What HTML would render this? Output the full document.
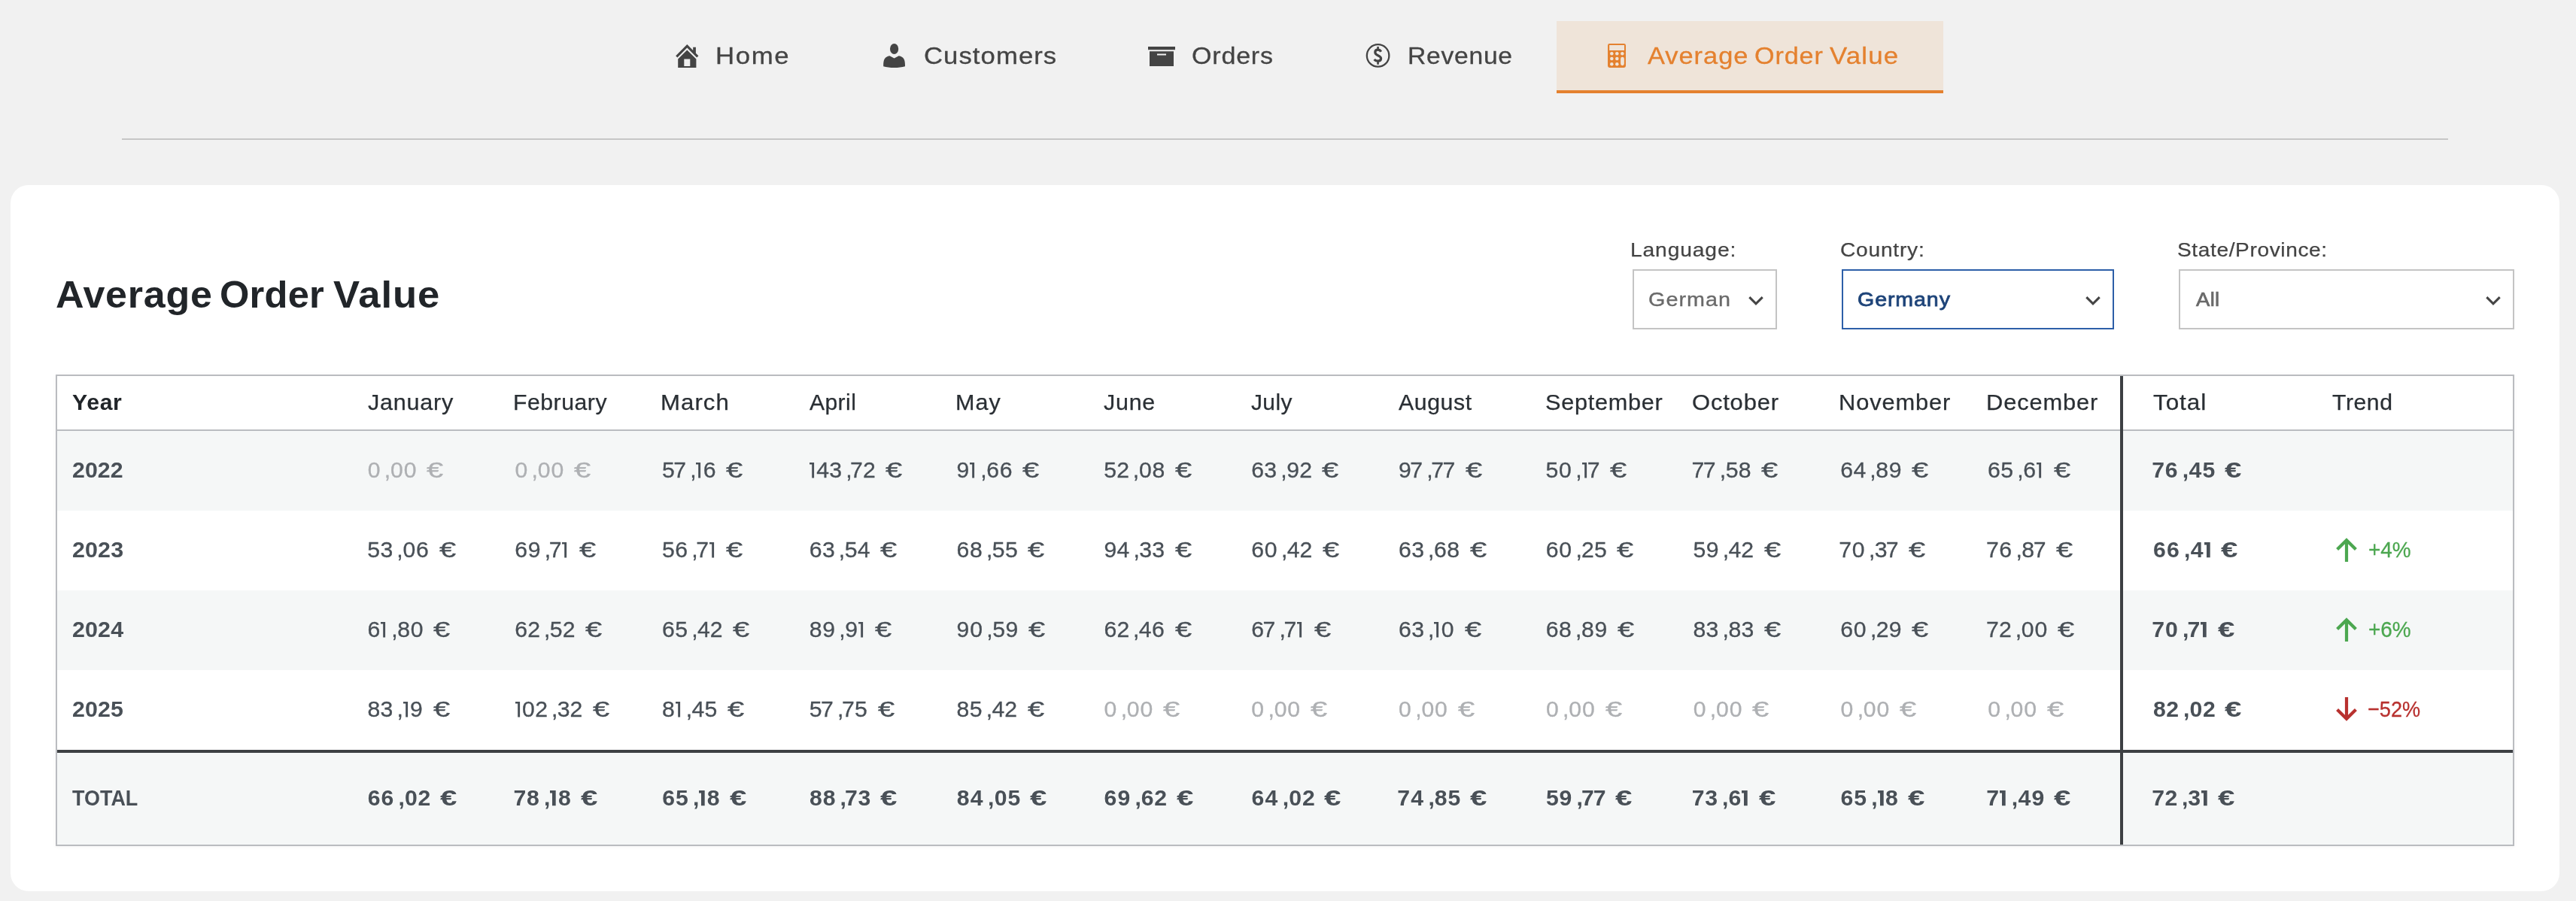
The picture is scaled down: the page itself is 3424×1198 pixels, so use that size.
<!DOCTYPE html>
<html lang="en"><head><meta charset="utf-8"><title>Average Order Value</title>
<style>

html,body{margin:0;padding:0}
body{width:3424px;height:1198px;overflow:hidden;background:#f1f1f1;position:relative;
 font-family:"Liberation Sans",sans-serif;color:#444}
.t{position:absolute;white-space:pre;line-height:1;display:block;transform-origin:0 50%}
.abs{position:absolute}
.nav{font-size:32px;color:#444;-webkit-text-stroke:0.3px currentColor}
.card{position:absolute;left:14px;top:246px;width:3388px;height:939px;background:#fff;border-radius:24px}
.hr{position:absolute;left:162px;top:184px;width:3092px;height:2px;background:#c6c6c6}
.tab{position:absolute;left:2069px;top:28px;width:514px;height:92px;background:#efe4d9;border-bottom:4px solid #e4812f}
.h1{font-size:50.3px;font-weight:700;color:#212529}
.lbl{font-size:26px;color:#444;-webkit-text-stroke:0.25px currentColor}
.sel{position:absolute;box-sizing:border-box;border:2px solid #c4c4c4;background:#fff;top:358px;height:80px}
.sel.act{border-color:#2d5fa8}
.selt{font-size:26.5px;color:#6a6a6a;font-weight:400;-webkit-text-stroke:0.35px #6a6a6a}
.tbl{position:absolute;left:74px;top:498px;width:3268px;height:627px;box-sizing:border-box;border:2px solid #babcc0;background:#fff;
 box-shadow:0 1px 5px rgba(0,0,0,.05)}
.row{position:absolute;left:76px;width:3264px;background:#f5f7f7}
.hl{position:absolute;background:#babcc0}
.dk{position:absolute;background:#3d4043}
.th{font-size:28.8px;color:#2a2f34;-webkit-text-stroke:0.25px currentColor}
.thb{font-size:28.8px;color:#212529;font-weight:700}
.c{position:absolute;white-space:nowrap;line-height:1;font-size:30.2px;color:#495057;-webkit-text-stroke:0.3px currentColor}
.c.z{color:#aeb0b3}
.c.b{font-weight:700;color:#495057;font-size:30.2px;-webkit-text-stroke:0}
.c i{font-style:normal;display:inline-block}
.yr{font-weight:700;color:#495057}
.eu{display:inline-block;transform-origin:0 50%}
.tr{font-size:30px;-webkit-text-stroke:0.3px currentColor}

.c .d0{margin:0 0.45px 0 0.45px}
.c .d2{margin:0 -0.10px 0 -0.10px}
.c .d3{margin:0 0.10px 0 0.10px}
.c .d4{margin:0 0.10px 0 0.10px}
.c .d5{margin:0 0.18px 0 0.18px}
.c .d6{margin:0 0.30px 0 0.30px}
.c .d7{margin:0 0.25px 0 -1.75px}
.c .d8{margin:0 0.25px 0 0.25px}
.c .d9{margin:0 0.30px 0 0.30px}
.c.b .d0{margin:0 0.65px 0 0.65px}
.c.b .d2{margin:0 0.10px 0 0.10px}
.c.b .d3{margin:0 0.30px 0 0.30px}
.c.b .d4{margin:0 0.80px 0 0.80px}
.c.b .d5{margin:0 0.45px 0 0.45px}
.c.b .d6{margin:0 0.50px 0 0.50px}
.c.b .d7{margin:0 0.35px 0 -1.45px}
.c.b .d8{margin:0 0.45px 0 0.45px}
.c.b .d9{margin:0 0.50px 0 0.50px}
.c svg{fill:currentColor;overflow:visible;display:inline-block}
.c .d1{margin:0 3.0px 0 0.6px}
.c.b .d1{margin:0 2.3px 0 0.5px}
.c .cm{margin-left:4.96px;margin-right:-0.70px}
.c.b .cm{margin-left:5.69px;margin-right:-0.44px}
.c .eu{margin-left:13.50px;transform:scaleX(1.320)}
.c.b .eu{margin-left:12.50px;transform:scaleX(1.335)}
</style></head><body><div id="wrap" style="position:absolute;left:0;top:0;width:3424px;height:1198px;will-change:transform">
<div class="tab"></div>
<span class="t nav" id="nav_home" style="left:951.31px;top:58.00px;letter-spacing:1.458px;transform:scaleX(1.0874);">Home</span>
<span class="t nav" id="nav_cust" style="left:1228.30px;top:58.00px;letter-spacing:0.982px;transform:scaleX(1.0839);">Customers</span>
<span class="t nav" id="nav_ord" style="left:1583.85px;top:58.00px;letter-spacing:0.758px;transform:scaleX(1.0633);">Orders</span>
<span class="t nav" id="nav_rev" style="left:1870.60px;top:58.00px;letter-spacing:0.682px;transform:scaleX(1.0519);">Revenue</span>
<span class="t nav" id="nav_aov1" style="left:2190.29px;top:58.00px;letter-spacing:0.910px;transform:scaleX(1.0750);color:#e4812f;">Average</span>
<span class="t nav" id="nav_aov2" style="left:2331.54px;top:58.00px;letter-spacing:0.839px;transform:scaleX(1.0671);color:#e4812f;">Order</span>
<span class="t nav" id="nav_aov3" style="left:2432.01px;top:58.00px;letter-spacing:1.056px;transform:scaleX(1.0882);color:#e4812f;">Value</span>
<svg class="abs" style="left:897px;top:58px" width="33" height="33" viewBox="0 0 33 33"><g fill="#444">
<path d="M16.3 1 L1.2 16.2 L3.4 18.4 L16.3 5.6 L29.2 18.4 L31.4 16.2 L27.9 12.7 L27.9 4.8 L24.2 4.8 L24.2 9 Z"/>
<path d="M16.3 8.6 L4.2 20.6 L4.2 32 L28.4 32 L28.4 20.6 Z M12.3 20.4 L20.3 20.4 L20.3 30 L12.3 30 Z" fill-rule="evenodd"/>
</g></svg>
<svg class="abs" style="left:1173px;top:57px" width="32" height="34" viewBox="0 0 32 34"><g fill="#444">
<ellipse cx="15.6" cy="8" rx="5.6" ry="7"/>
<path d="M1.2 31.2 C1 22 3 18.5 9.5 17.2 L15.6 20.6 L21.7 17.2 C28.2 18.5 30.2 22 30 31.2 C22 33.6 9 33.6 1.2 31.2 Z"/>
</g></svg>
<svg class="abs" style="left:1525px;top:61px" width="38" height="28" viewBox="0 0 38 28"><g fill="#444">
<rect x="1" y="1" width="36" height="4.2"/>
<path d="M3 7.2 H35 V27 H3 Z M13 10.4 H25 V12.6 H13 Z" fill-rule="evenodd"/>
</g></svg>
<svg class="abs" style="left:1813px;top:56px" width="37" height="37" viewBox="0 0 37 37">
<circle cx="18.6" cy="17.9" r="14.75" fill="none" stroke="#444" stroke-width="2.3"/>
<path d="M22.7 12.8 C21.7 11 20.3 10.2 18.4 10.2 C16.2 10.2 14.8 11.6 14.8 13.6 C14.8 15.8 16.4 16.8 18.6 17.7 C20.9 18.7 22.6 19.7 22.6 21.8 C22.6 24 20.9 25.2 18.6 25.2 C16.4 25.2 14.8 24.4 13.6 22.9" fill="none" stroke="#444" stroke-width="3.2"/>
<path d="M18.55 5.9 V10 M18.55 25.4 V29.8" fill="none" stroke="#444" stroke-width="2.6"/>
</svg>
<svg class="abs" style="left:2136px;top:57px" width="26" height="34" viewBox="0 0 26 34">
<path fill="#e4812f" fill-rule="evenodd" d="M3.4 1 H22.6 A2.4 2.4 0 0 1 25 3.4 V30.6 A2.4 2.4 0 0 1 22.6 33 H3.4 A2.4 2.4 0 0 1 1 30.6 V3.4 A2.4 2.4 0 0 1 3.4 1 Z M3.2 3.0 V9.9 H23.0 V3.0 Z"/>
<g fill="#efe4d9">
<circle cx="6.3" cy="14.2" r="2.25"/><circle cx="13.3" cy="14.2" r="2.25"/><circle cx="20.3" cy="14.2" r="2.25"/>
<circle cx="6.3" cy="21" r="2.25"/><circle cx="13.3" cy="21" r="2.25"/>
<circle cx="6.3" cy="28.2" r="2.25"/><circle cx="13.3" cy="28.2" r="2.25"/>
<rect x="18.1" y="18.8" width="4.75" height="11.4" rx="2.37"/>
</g></svg>
<div class="hr"></div>
<div class="card"></div>
<span class="t h1" id="h1a" style="left:73.50px;top:367.00px;letter-spacing:0.717px;transform:scaleX(1.0345);">Average</span>
<span class="t h1" id="h1b" style="left:291.62px;top:367.00px;letter-spacing:0.175px;transform:scaleX(1.0079);">Order</span>
<span class="t h1" id="h1c" style="left:442.64px;top:367.00px;letter-spacing:0.942px;transform:scaleX(1.0457);">Value</span>
<span class="t lbl" id="lb_lang" style="left:2167.12px;top:319.00px;letter-spacing:0.785px;transform:scaleX(1.0862);">Language:</span>
<span class="t lbl" id="lb_ctry" style="left:2445.70px;top:319.00px;letter-spacing:0.695px;transform:scaleX(1.0834);">Country:</span>
<span class="t lbl" id="lb_st" style="left:2893.86px;top:319.00px;letter-spacing:0.596px;transform:scaleX(1.0780);">State/Province:</span>
<div class="sel" style="left:2170px;width:192px"></div>
<div class="sel act" style="left:2448px;width:362px"></div>
<div class="sel" style="left:2896px;width:446px"></div>
<span class="t selt" id="s_lang" style="left:2191.15px;top:385.00px;letter-spacing:0.958px;transform:scaleX(1.0837);font-weight:400;">German</span>
<span class="t selt" id="s_ctry" style="left:2469.20px;top:385.00px;letter-spacing:0.861px;transform:scaleX(1.0770);color:#1e4479;-webkit-text-stroke:0.8px #1e4479;">Germany</span>
<span class="t selt" id="s_st" style="left:2919.06px;top:385.00px;letter-spacing:0.323px;transform:scaleX(1.0355);-webkit-text-stroke:0.7px #6a6a6a;">All</span>
<svg class="abs" style="left:2321.2px;top:390.9px" width="26" height="18" viewBox="0 0 26 18"><path d="M4.3 4.15 L13 12.85 L21.7 4.15" fill="none" stroke="#444" stroke-width="3"/></svg>
<svg class="abs" style="left:2769.0px;top:390.9px" width="26" height="18" viewBox="0 0 26 18"><path d="M4.3 4.15 L13 12.85 L21.7 4.15" fill="none" stroke="#444" stroke-width="3"/></svg>
<svg class="abs" style="left:3301.1px;top:390.9px" width="26" height="18" viewBox="0 0 26 18"><path d="M4.3 4.15 L13 12.85 L21.7 4.15" fill="none" stroke="#444" stroke-width="3"/></svg>
<div class="tbl"></div>
<div class="row" style="top:573px;height:106px"></div>
<div class="row" style="top:785px;height:106px"></div>
<div class="row" style="top:1001px;height:122px"></div>
<div class="hl" style="left:76px;top:571px;width:3264px;height:2px"></div>
<div class="dk" style="left:76px;top:997px;width:3264px;height:4px"></div>
<div class="dk" style="left:2818px;top:500px;width:4px;height:623px"></div>
<span class="t thb" id="th_year" style="left:96.08px;top:521.00px;letter-spacing:0.632px;transform:scaleX(1.0498);">Year</span>
<span class="t th" id="th_0" style="left:488.75px;top:521.00px;letter-spacing:0.678px;transform:scaleX(1.0635);">January</span>
<span class="t th" id="th_1" style="left:682.45px;top:521.00px;letter-spacing:0.498px;transform:scaleX(1.0485);">February</span>
<span class="t th" id="th_2" style="left:877.98px;top:521.00px;letter-spacing:0.968px;transform:scaleX(1.0827);">March</span>
<span class="t th" id="th_3" style="left:1076.17px;top:521.00px;letter-spacing:0.395px;transform:scaleX(1.0443);">April</span>
<span class="t th" id="th_4" style="left:1269.73px;top:521.00px;letter-spacing:0.993px;transform:scaleX(1.0605);">May</span>
<span class="t th" id="th_5" style="left:1467.46px;top:521.00px;letter-spacing:0.724px;transform:scaleX(1.0564);">June</span>
<span class="t th" id="th_6" style="left:1663.06px;top:521.00px;letter-spacing:0.405px;transform:scaleX(1.0370);">July</span>
<span class="t th" id="th_7" style="left:1859.47px;top:521.00px;letter-spacing:0.569px;transform:scaleX(1.0500);">August</span>
<span class="t th" id="th_8" style="left:2054.14px;top:521.00px;letter-spacing:0.699px;transform:scaleX(1.0640);">September</span>
<span class="t th" id="th_9" style="left:2249.37px;top:521.00px;letter-spacing:0.773px;transform:scaleX(1.0741);">October</span>
<span class="t th" id="th_10" style="left:2444.41px;top:521.00px;letter-spacing:0.815px;transform:scaleX(1.0703);">November</span>
<span class="t th" id="th_11" style="left:2640.40px;top:521.00px;letter-spacing:0.820px;transform:scaleX(1.0707);">December</span>
<span class="t th" id="th_total" style="left:2862.03px;top:521.00px;letter-spacing:0.832px;transform:scaleX(1.0933);">Total</span>
<span class="t th" id="th_trend" style="left:3099.65px;top:521.00px;letter-spacing:0.544px;transform:scaleX(1.0475);">Trend</span>
<span class="t yr" id="yr_2022" style="left:95.65px;top:610.00px;letter-spacing:0.053px;transform:scaleX(1.0037);font-size:30.2px;">2022</span>
<div class="c z" id="c_0_0" style="left:488.20px;top:610.00px"><i class="d0">0</i><i class="cm">,</i><i class="d0">0</i><i class="d0">0</i><i class="eu">€</i></div>
<div class="c z" id="c_0_1" style="left:683.98px;top:610.00px"><i class="d0">0</i><i class="cm">,</i><i class="d0">0</i><i class="d0">0</i><i class="eu">€</i></div>
<div class="c" id="c_0_2" style="left:879.76px;top:610.00px"><i class="d5">5</i><i class="d7">7</i><i class="cm">,</i><svg class="d1" width="6.1" height="20.5" viewBox="0 0 6.1 20.5"><path d="M0 0H6.1V20.5H3.2V2.5H0Z"/></svg><i class="d6">6</i><i class="eu">€</i></div>
<div class="c" id="c_0_3" style="left:1075.54px;top:610.00px"><svg class="d1" width="6.1" height="20.5" viewBox="0 0 6.1 20.5"><path d="M0 0H6.1V20.5H3.2V2.5H0Z"/></svg><i class="d4">4</i><i class="d3">3</i><i class="cm">,</i><i class="d7">7</i><i class="d2">2</i><i class="eu">€</i></div>
<div class="c" id="c_0_4" style="left:1271.32px;top:610.00px"><i class="d9">9</i><svg class="d1" width="6.1" height="20.5" viewBox="0 0 6.1 20.5"><path d="M0 0H6.1V20.5H3.2V2.5H0Z"/></svg><i class="cm">,</i><i class="d6">6</i><i class="d6">6</i><i class="eu">€</i></div>
<div class="c" id="c_0_5" style="left:1467.10px;top:610.00px"><i class="d5">5</i><i class="d2">2</i><i class="cm">,</i><i class="d0">0</i><i class="d8">8</i><i class="eu">€</i></div>
<div class="c" id="c_0_6" style="left:1662.88px;top:610.00px"><i class="d6">6</i><i class="d3">3</i><i class="cm">,</i><i class="d9">9</i><i class="d2">2</i><i class="eu">€</i></div>
<div class="c" id="c_0_7" style="left:1858.66px;top:610.00px"><i class="d9">9</i><i class="d7">7</i><i class="cm">,</i><i class="d7">7</i><i class="d7">7</i><i class="eu">€</i></div>
<div class="c" id="c_0_8" style="left:2054.44px;top:610.00px"><i class="d5">5</i><i class="d0">0</i><i class="cm">,</i><svg class="d1" width="6.1" height="20.5" viewBox="0 0 6.1 20.5"><path d="M0 0H6.1V20.5H3.2V2.5H0Z"/></svg><i class="d7">7</i><i class="eu">€</i></div>
<div class="c" id="c_0_9" style="left:2250.22px;top:610.00px"><i class="d7">7</i><i class="d7">7</i><i class="cm">,</i><i class="d5">5</i><i class="d8">8</i><i class="eu">€</i></div>
<div class="c" id="c_0_10" style="left:2446.00px;top:610.00px"><i class="d6">6</i><i class="d4">4</i><i class="cm">,</i><i class="d8">8</i><i class="d9">9</i><i class="eu">€</i></div>
<div class="c" id="c_0_11" style="left:2641.78px;top:610.00px"><i class="d6">6</i><i class="d5">5</i><i class="cm">,</i><i class="d6">6</i><svg class="d1" width="6.1" height="20.5" viewBox="0 0 6.1 20.5"><path d="M0 0H6.1V20.5H3.2V2.5H0Z"/></svg><i class="eu">€</i></div>
<div class="c b" id="c_0_12" style="left:2861.60px;top:610.00px"><i class="d7">7</i><i class="d6">6</i><i class="cm">,</i><i class="d4">4</i><i class="d5">5</i><i class="eu">€</i></div>
<span class="t yr" id="yr_2023" style="left:95.64px;top:716.00px;letter-spacing:0.117px;transform:scaleX(1.0081);font-size:30.2px;">2023</span>
<div class="c" id="c_1_0" style="left:488.20px;top:716.00px"><i class="d5">5</i><i class="d3">3</i><i class="cm">,</i><i class="d0">0</i><i class="d6">6</i><i class="eu">€</i></div>
<div class="c" id="c_1_1" style="left:683.98px;top:716.00px"><i class="d6">6</i><i class="d9">9</i><i class="cm">,</i><i class="d7">7</i><svg class="d1" width="6.1" height="20.5" viewBox="0 0 6.1 20.5"><path d="M0 0H6.1V20.5H3.2V2.5H0Z"/></svg><i class="eu">€</i></div>
<div class="c" id="c_1_2" style="left:879.76px;top:716.00px"><i class="d5">5</i><i class="d6">6</i><i class="cm">,</i><i class="d7">7</i><svg class="d1" width="6.1" height="20.5" viewBox="0 0 6.1 20.5"><path d="M0 0H6.1V20.5H3.2V2.5H0Z"/></svg><i class="eu">€</i></div>
<div class="c" id="c_1_3" style="left:1075.54px;top:716.00px"><i class="d6">6</i><i class="d3">3</i><i class="cm">,</i><i class="d5">5</i><i class="d4">4</i><i class="eu">€</i></div>
<div class="c" id="c_1_4" style="left:1271.32px;top:716.00px"><i class="d6">6</i><i class="d8">8</i><i class="cm">,</i><i class="d5">5</i><i class="d5">5</i><i class="eu">€</i></div>
<div class="c" id="c_1_5" style="left:1467.10px;top:716.00px"><i class="d9">9</i><i class="d4">4</i><i class="cm">,</i><i class="d3">3</i><i class="d3">3</i><i class="eu">€</i></div>
<div class="c" id="c_1_6" style="left:1662.88px;top:716.00px"><i class="d6">6</i><i class="d0">0</i><i class="cm">,</i><i class="d4">4</i><i class="d2">2</i><i class="eu">€</i></div>
<div class="c" id="c_1_7" style="left:1858.66px;top:716.00px"><i class="d6">6</i><i class="d3">3</i><i class="cm">,</i><i class="d6">6</i><i class="d8">8</i><i class="eu">€</i></div>
<div class="c" id="c_1_8" style="left:2054.44px;top:716.00px"><i class="d6">6</i><i class="d0">0</i><i class="cm">,</i><i class="d2">2</i><i class="d5">5</i><i class="eu">€</i></div>
<div class="c" id="c_1_9" style="left:2250.22px;top:716.00px"><i class="d5">5</i><i class="d9">9</i><i class="cm">,</i><i class="d4">4</i><i class="d2">2</i><i class="eu">€</i></div>
<div class="c" id="c_1_10" style="left:2446.00px;top:716.00px"><i class="d7">7</i><i class="d0">0</i><i class="cm">,</i><i class="d3">3</i><i class="d7">7</i><i class="eu">€</i></div>
<div class="c" id="c_1_11" style="left:2641.78px;top:716.00px"><i class="d7">7</i><i class="d6">6</i><i class="cm">,</i><i class="d8">8</i><i class="d7">7</i><i class="eu">€</i></div>
<div class="c b" id="c_1_12" style="left:2861.60px;top:716.00px"><i class="d6">6</i><i class="d6">6</i><i class="cm">,</i><i class="d4">4</i><svg class="d1" width="7.7" height="20.3" viewBox="0 0 7.7 20.3"><path d="M0 0H7.7V20.3H3V3.6H0Z"/></svg><i class="eu">€</i></div>
<span class="t yr" id="yr_2024" style="left:95.64px;top:822.00px;letter-spacing:0.126px;transform:scaleX(1.0087);font-size:30.2px;">2024</span>
<div class="c" id="c_2_0" style="left:488.20px;top:822.00px"><i class="d6">6</i><svg class="d1" width="6.1" height="20.5" viewBox="0 0 6.1 20.5"><path d="M0 0H6.1V20.5H3.2V2.5H0Z"/></svg><i class="cm">,</i><i class="d8">8</i><i class="d0">0</i><i class="eu">€</i></div>
<div class="c" id="c_2_1" style="left:683.98px;top:822.00px"><i class="d6">6</i><i class="d2">2</i><i class="cm">,</i><i class="d5">5</i><i class="d2">2</i><i class="eu">€</i></div>
<div class="c" id="c_2_2" style="left:879.76px;top:822.00px"><i class="d6">6</i><i class="d5">5</i><i class="cm">,</i><i class="d4">4</i><i class="d2">2</i><i class="eu">€</i></div>
<div class="c" id="c_2_3" style="left:1075.54px;top:822.00px"><i class="d8">8</i><i class="d9">9</i><i class="cm">,</i><i class="d9">9</i><svg class="d1" width="6.1" height="20.5" viewBox="0 0 6.1 20.5"><path d="M0 0H6.1V20.5H3.2V2.5H0Z"/></svg><i class="eu">€</i></div>
<div class="c" id="c_2_4" style="left:1271.32px;top:822.00px"><i class="d9">9</i><i class="d0">0</i><i class="cm">,</i><i class="d5">5</i><i class="d9">9</i><i class="eu">€</i></div>
<div class="c" id="c_2_5" style="left:1467.10px;top:822.00px"><i class="d6">6</i><i class="d2">2</i><i class="cm">,</i><i class="d4">4</i><i class="d6">6</i><i class="eu">€</i></div>
<div class="c" id="c_2_6" style="left:1662.88px;top:822.00px"><i class="d6">6</i><i class="d7">7</i><i class="cm">,</i><i class="d7">7</i><svg class="d1" width="6.1" height="20.5" viewBox="0 0 6.1 20.5"><path d="M0 0H6.1V20.5H3.2V2.5H0Z"/></svg><i class="eu">€</i></div>
<div class="c" id="c_2_7" style="left:1858.66px;top:822.00px"><i class="d6">6</i><i class="d3">3</i><i class="cm">,</i><svg class="d1" width="6.1" height="20.5" viewBox="0 0 6.1 20.5"><path d="M0 0H6.1V20.5H3.2V2.5H0Z"/></svg><i class="d0">0</i><i class="eu">€</i></div>
<div class="c" id="c_2_8" style="left:2054.44px;top:822.00px"><i class="d6">6</i><i class="d8">8</i><i class="cm">,</i><i class="d8">8</i><i class="d9">9</i><i class="eu">€</i></div>
<div class="c" id="c_2_9" style="left:2250.22px;top:822.00px"><i class="d8">8</i><i class="d3">3</i><i class="cm">,</i><i class="d8">8</i><i class="d3">3</i><i class="eu">€</i></div>
<div class="c" id="c_2_10" style="left:2446.00px;top:822.00px"><i class="d6">6</i><i class="d0">0</i><i class="cm">,</i><i class="d2">2</i><i class="d9">9</i><i class="eu">€</i></div>
<div class="c" id="c_2_11" style="left:2641.78px;top:822.00px"><i class="d7">7</i><i class="d2">2</i><i class="cm">,</i><i class="d0">0</i><i class="d0">0</i><i class="eu">€</i></div>
<div class="c b" id="c_2_12" style="left:2861.60px;top:822.00px"><i class="d7">7</i><i class="d0">0</i><i class="cm">,</i><i class="d7">7</i><svg class="d1" width="7.7" height="20.3" viewBox="0 0 7.7 20.3"><path d="M0 0H7.7V20.3H3V3.6H0Z"/></svg><i class="eu">€</i></div>
<span class="t yr" id="yr_2025" style="left:95.65px;top:928.00px;letter-spacing:0.084px;transform:scaleX(1.0058);font-size:30.2px;">2025</span>
<div class="c" id="c_3_0" style="left:488.20px;top:928.00px"><i class="d8">8</i><i class="d3">3</i><i class="cm">,</i><svg class="d1" width="6.1" height="20.5" viewBox="0 0 6.1 20.5"><path d="M0 0H6.1V20.5H3.2V2.5H0Z"/></svg><i class="d9">9</i><i class="eu">€</i></div>
<div class="c" id="c_3_1" style="left:683.98px;top:928.00px"><svg class="d1" width="6.1" height="20.5" viewBox="0 0 6.1 20.5"><path d="M0 0H6.1V20.5H3.2V2.5H0Z"/></svg><i class="d0">0</i><i class="d2">2</i><i class="cm">,</i><i class="d3">3</i><i class="d2">2</i><i class="eu">€</i></div>
<div class="c" id="c_3_2" style="left:879.76px;top:928.00px"><i class="d8">8</i><svg class="d1" width="6.1" height="20.5" viewBox="0 0 6.1 20.5"><path d="M0 0H6.1V20.5H3.2V2.5H0Z"/></svg><i class="cm">,</i><i class="d4">4</i><i class="d5">5</i><i class="eu">€</i></div>
<div class="c" id="c_3_3" style="left:1075.54px;top:928.00px"><i class="d5">5</i><i class="d7">7</i><i class="cm">,</i><i class="d7">7</i><i class="d5">5</i><i class="eu">€</i></div>
<div class="c" id="c_3_4" style="left:1271.32px;top:928.00px"><i class="d8">8</i><i class="d5">5</i><i class="cm">,</i><i class="d4">4</i><i class="d2">2</i><i class="eu">€</i></div>
<div class="c z" id="c_3_5" style="left:1467.10px;top:928.00px"><i class="d0">0</i><i class="cm">,</i><i class="d0">0</i><i class="d0">0</i><i class="eu">€</i></div>
<div class="c z" id="c_3_6" style="left:1662.88px;top:928.00px"><i class="d0">0</i><i class="cm">,</i><i class="d0">0</i><i class="d0">0</i><i class="eu">€</i></div>
<div class="c z" id="c_3_7" style="left:1858.66px;top:928.00px"><i class="d0">0</i><i class="cm">,</i><i class="d0">0</i><i class="d0">0</i><i class="eu">€</i></div>
<div class="c z" id="c_3_8" style="left:2054.44px;top:928.00px"><i class="d0">0</i><i class="cm">,</i><i class="d0">0</i><i class="d0">0</i><i class="eu">€</i></div>
<div class="c z" id="c_3_9" style="left:2250.22px;top:928.00px"><i class="d0">0</i><i class="cm">,</i><i class="d0">0</i><i class="d0">0</i><i class="eu">€</i></div>
<div class="c z" id="c_3_10" style="left:2446.00px;top:928.00px"><i class="d0">0</i><i class="cm">,</i><i class="d0">0</i><i class="d0">0</i><i class="eu">€</i></div>
<div class="c z" id="c_3_11" style="left:2641.78px;top:928.00px"><i class="d0">0</i><i class="cm">,</i><i class="d0">0</i><i class="d0">0</i><i class="eu">€</i></div>
<div class="c b" id="c_3_12" style="left:2861.60px;top:928.00px"><i class="d8">8</i><i class="d2">2</i><i class="cm">,</i><i class="d0">0</i><i class="d2">2</i><i class="eu">€</i></div>
<span class="t yr" id="yr_TOTAL" style="left:96.40px;top:1047.00px;transform:scaleX(0.9359);font-size:28.8px;">TOTAL</span>
<div class="c b" id="c_4_0" style="left:488.20px;top:1046.00px"><i class="d6">6</i><i class="d6">6</i><i class="cm">,</i><i class="d0">0</i><i class="d2">2</i><i class="eu">€</i></div>
<div class="c b" id="c_4_1" style="left:683.98px;top:1046.00px"><i class="d7">7</i><i class="d8">8</i><i class="cm">,</i><svg class="d1" width="7.7" height="20.3" viewBox="0 0 7.7 20.3"><path d="M0 0H7.7V20.3H3V3.6H0Z"/></svg><i class="d8">8</i><i class="eu">€</i></div>
<div class="c b" id="c_4_2" style="left:879.76px;top:1046.00px"><i class="d6">6</i><i class="d5">5</i><i class="cm">,</i><svg class="d1" width="7.7" height="20.3" viewBox="0 0 7.7 20.3"><path d="M0 0H7.7V20.3H3V3.6H0Z"/></svg><i class="d8">8</i><i class="eu">€</i></div>
<div class="c b" id="c_4_3" style="left:1075.54px;top:1046.00px"><i class="d8">8</i><i class="d8">8</i><i class="cm">,</i><i class="d7">7</i><i class="d3">3</i><i class="eu">€</i></div>
<div class="c b" id="c_4_4" style="left:1271.32px;top:1046.00px"><i class="d8">8</i><i class="d4">4</i><i class="cm">,</i><i class="d0">0</i><i class="d5">5</i><i class="eu">€</i></div>
<div class="c b" id="c_4_5" style="left:1467.10px;top:1046.00px"><i class="d6">6</i><i class="d9">9</i><i class="cm">,</i><i class="d6">6</i><i class="d2">2</i><i class="eu">€</i></div>
<div class="c b" id="c_4_6" style="left:1662.88px;top:1046.00px"><i class="d6">6</i><i class="d4">4</i><i class="cm">,</i><i class="d0">0</i><i class="d2">2</i><i class="eu">€</i></div>
<div class="c b" id="c_4_7" style="left:1858.66px;top:1046.00px"><i class="d7">7</i><i class="d4">4</i><i class="cm">,</i><i class="d8">8</i><i class="d5">5</i><i class="eu">€</i></div>
<div class="c b" id="c_4_8" style="left:2054.44px;top:1046.00px"><i class="d5">5</i><i class="d9">9</i><i class="cm">,</i><i class="d7">7</i><i class="d7">7</i><i class="eu">€</i></div>
<div class="c b" id="c_4_9" style="left:2250.22px;top:1046.00px"><i class="d7">7</i><i class="d3">3</i><i class="cm">,</i><i class="d6">6</i><svg class="d1" width="7.7" height="20.3" viewBox="0 0 7.7 20.3"><path d="M0 0H7.7V20.3H3V3.6H0Z"/></svg><i class="eu">€</i></div>
<div class="c b" id="c_4_10" style="left:2446.00px;top:1046.00px"><i class="d6">6</i><i class="d5">5</i><i class="cm">,</i><svg class="d1" width="7.7" height="20.3" viewBox="0 0 7.7 20.3"><path d="M0 0H7.7V20.3H3V3.6H0Z"/></svg><i class="d8">8</i><i class="eu">€</i></div>
<div class="c b" id="c_4_11" style="left:2641.78px;top:1046.00px"><i class="d7">7</i><svg class="d1" width="7.7" height="20.3" viewBox="0 0 7.7 20.3"><path d="M0 0H7.7V20.3H3V3.6H0Z"/></svg><i class="cm">,</i><i class="d4">4</i><i class="d9">9</i><i class="eu">€</i></div>
<div class="c b" id="c_4_12" style="left:2861.60px;top:1046.00px"><i class="d7">7</i><i class="d2">2</i><i class="cm">,</i><i class="d3">3</i><svg class="d1" width="7.7" height="20.3" viewBox="0 0 7.7 20.3"><path d="M0 0H7.7V20.3H3V3.6H0Z"/></svg><i class="eu">€</i></div>
<svg class="abs" style="left:3105.0px;top:715.0px" width="28" height="32" viewBox="0 0 28 32"><path d="M14 32 V3 M1.6 15.6 L14 3.2 L26.4 15.6" fill="none" stroke="#4ca750" stroke-width="4.2"/></svg>
<svg class="abs" style="left:3105.0px;top:821.0px" width="28" height="32" viewBox="0 0 28 32"><path d="M14 32 V3 M1.6 15.6 L14 3.2 L26.4 15.6" fill="none" stroke="#4ca750" stroke-width="4.2"/></svg>
<svg class="abs" style="left:3105.0px;top:927.0px" width="28" height="32" viewBox="0 0 28 32"><path d="M14 0 V29 M1.6 16.4 L14 28.8 L26.4 16.4" fill="none" stroke="#b8312f" stroke-width="4.2"/></svg>
<span class="t tr" id="tr_0" style="left:3147.58px;top:716.00px;transform:scaleX(0.9310);color:#4ca750;">+4%</span>
<span class="t tr" id="tr_1" style="left:3147.58px;top:822.00px;transform:scaleX(0.9310);color:#4ca750;">+6%</span>
<span class="t tr" id="tr_2" style="left:3146.80px;top:928.00px;transform:scaleX(0.9029);color:#b8312f;">−52%</span>
</div></body></html>
